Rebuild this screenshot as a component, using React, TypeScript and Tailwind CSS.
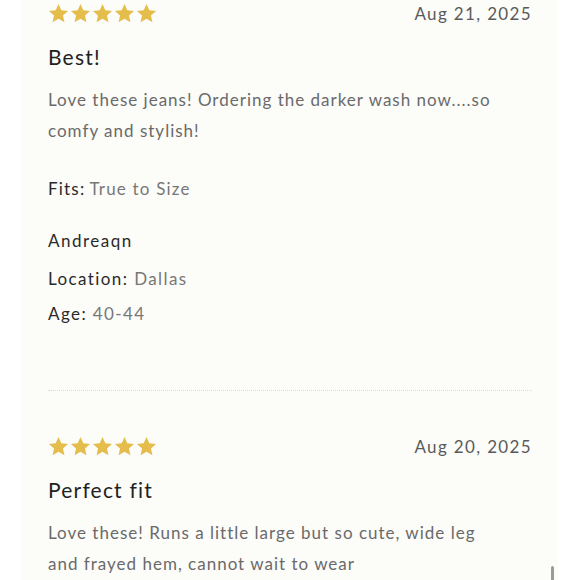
import React from 'react';

const Stars = () => (
  <div className="flex gap-[1px]">
    {[0, 1, 2, 3, 4].map((i) => (
      <svg key={i} width="21" height="21" viewBox="0 0 24 24" className="shrink-0">
        <path
          d="M12 1.2l3.2 7.1 7.7.8-5.8 5.2 1.7 7.6L12 18l-6.8 3.9 1.7-7.6L1.1 9.1l7.7-.8z"
          fill="#e4bd4c"
        />
      </svg>
    ))}
  </div>
);

type Review = {
  date: string;
  title: string;
  body: string;
  fits?: string;
  author?: string;
  location?: string;
  age?: string;
};

const reviews: Review[] = [
  {
    date: 'Aug 21, 2025',
    title: 'Best!',
    body: 'Love these jeans! Ordering the darker wash now....so\ncomfy and stylish!',
    fits: 'True to Size',
    author: 'Andreaqn',
    location: 'Dallas',
    age: '40-44',
  },
  {
    date: 'Aug 20, 2025',
    title: 'Perfect fit',
    body: 'Love these! Runs a little large but so cute, wide leg\nand frayed hem, cannot wait to wear',
  },
];

function ReviewItem({ r }: { r: Review }) {
  return (
    <div>
      <div className="flex items-center justify-between h-[21px]">
        <Stars />
        <span className="text-[17px] text-[#5a5a5a] tracking-[1.35px]">{r.date}</span>
      </div>
      <h3 className="mt-[19px] text-[21px] leading-[28px] text-[#222] tracking-[1.2px]">{r.title}</h3>
      <p className="mt-[13px] whitespace-pre-line text-[17px] leading-[31px] text-[#6a6a6a] tracking-[1px]">
        {r.body}
      </p>
      {r.fits && (
        <div className="mt-[31px] text-[17px] leading-[24px] tracking-[1.2px]">
          <span className="text-[#2a2a2a]">Fits:</span>
          <span className="text-[#777] ml-[4px]">{r.fits}</span>
        </div>
      )}
      {r.author && (
        <div className="mt-[28px] text-[17px] leading-[24px] text-[#2a2a2a] tracking-[1.5px]">{r.author}</div>
      )}
      {r.location && (
        <div className="mt-[14px] text-[17px] leading-[24px] tracking-[1.4px]">
          <span className="text-[#2a2a2a]">Location:</span>{' '}
          <span className="text-[#777]">{r.location}</span>
        </div>
      )}
      {r.age && (
        <div className="mt-[11px] text-[17px] leading-[24px] tracking-[1.4px]">
          <span className="text-[#2a2a2a]">Age:</span>{' '}
          <span className="text-[#777]">{r.age}</span>
        </div>
      )}
    </div>
  );
}

export default function App() {
  return (
    <div
      className="relative w-[580px] h-[580px] overflow-hidden bg-white"
      style={{ fontFamily: 'Lato, "Open Sans", sans-serif' }}
    >
      <div className="mx-[22px] h-full bg-[#fcfcf9] px-[26px] pt-[3px]">
        <ReviewItem r={reviews[0]} />
        <div className="mt-[64px] border-t border-dotted border-[#dcdcd6]" />
        <div className="mt-[45px]">
          <ReviewItem r={reviews[1]} />
        </div>
      </div>
      {/* scroll indicator */}
      <div className="absolute left-[551px] top-[566px] w-[3px] h-[16px] rounded-full bg-[#9a9a9a]" />
    </div>
  );
}
